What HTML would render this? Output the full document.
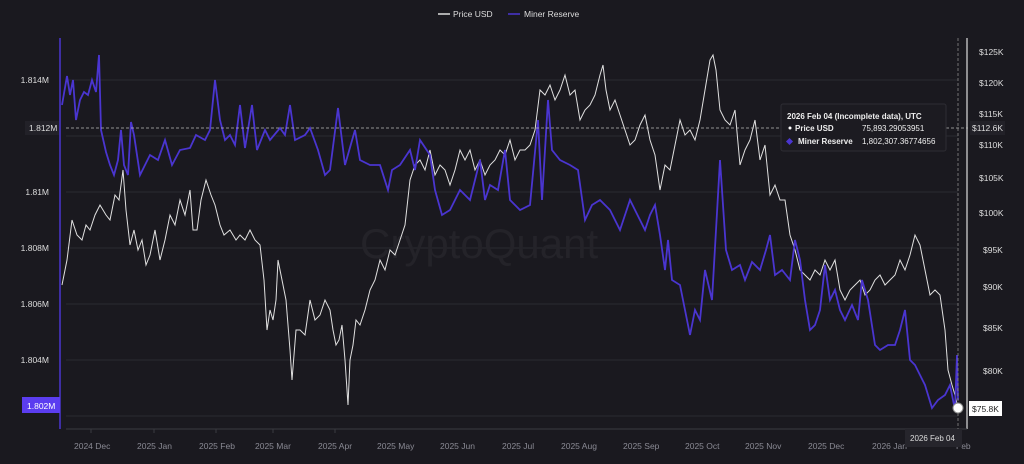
<!DOCTYPE html>
<html><head><meta charset="utf-8"><style>
body{margin:0;background:#1a191f;width:1024px;height:459px;overflow:hidden;font-family:"Liberation Sans",sans-serif}
svg text{font-family:"Liberation Sans",sans-serif}
</style></head><body>
<svg width="1024" height="459" xmlns="http://www.w3.org/2000/svg">
<rect width="1024" height="459" fill="#1a191f"/>
<g font-size="8.5" fill="#ddd">
<line x1="438" y1="14" x2="450" y2="14" stroke="#ddd" stroke-width="1.5"/><text x="453" y="17">Price USD</text>
<line x1="508" y1="14" x2="520" y2="14" stroke="#4a35d0" stroke-width="1.5"/><text x="524" y="17">Miner Reserve</text>
</g>
<g stroke="#2a2a30" stroke-width="1">
<line x1="66" y1="80" x2="958" y2="80"/><line x1="66" y1="136" x2="958" y2="136"/><line x1="66" y1="192" x2="958" y2="192"/><line x1="66" y1="248" x2="958" y2="248"/><line x1="66" y1="304" x2="958" y2="304"/><line x1="66" y1="360" x2="958" y2="360"/><line x1="66" y1="416" x2="958" y2="416"/>
</g>
<text x="360" y="258" font-size="42" fill="#242329">CryptoQuant</text>
<line x1="60" y1="38" x2="60" y2="429" stroke="#4a35d0" stroke-width="1.5"/>
<line x1="967" y1="38" x2="967" y2="429" stroke="#ddd" stroke-width="1.2"/>
<line x1="66" y1="429" x2="967" y2="429" stroke="#3a3a40"/>
<g font-size="8.5" fill="#ddd" text-anchor="end">
<text x="49" y="83">1.814M</text><text x="49" y="195">1.81M</text><text x="49" y="251">1.808M</text><text x="49" y="307">1.806M</text><text x="49" y="363">1.804M</text>
</g>
<rect x="25" y="121" width="34" height="14" fill="#222128"/><text x="29" y="131" font-size="8.5" fill="#ddd">1.812M</text>
<rect x="22" y="397" width="38" height="16" fill="#5b3df0"/><text x="27" y="409" font-size="8.5" fill="#fff">1.802M</text>
<g font-size="8.5" fill="#ddd">
<text x="979" y="55">$125K</text><text x="979" y="86">$120K</text><text x="979" y="117">$115K</text><text x="979" y="148">$110K</text><text x="979" y="181">$105K</text><text x="979" y="216">$100K</text><text x="983" y="253">$95K</text><text x="983" y="290">$90K</text><text x="983" y="331">$85K</text><text x="983" y="374">$80K</text>
</g>
<rect x="970" y="121" width="35" height="14" fill="#222128"/><text x="972" y="131" font-size="8.5" fill="#ddd">$112.6K</text>
<g font-size="8.5" fill="#8a8a94">
<text x="74" y="449">2024 Dec</text><text x="137" y="449">2025 Jan</text><text x="199" y="449">2025 Feb</text><text x="255" y="449">2025 Mar</text><text x="318" y="449">2025 Apr</text><text x="377" y="449">2025 May</text><text x="440" y="449">2025 Jun</text><text x="502" y="449">2025 Jul</text><text x="561" y="449">2025 Aug</text><text x="623" y="449">2025 Sep</text><text x="685" y="449">2025 Oct</text><text x="745" y="449">2025 Nov</text><text x="808" y="449">2025 Dec</text><text x="872" y="449">2026 Jan</text><text x="956" y="449">Feb</text>
</g>
<g stroke="#3a3a40"><line x1="91" y1="429" x2="91" y2="433"/><line x1="154" y1="429" x2="154" y2="433"/><line x1="216" y1="429" x2="216" y2="433"/><line x1="273" y1="429" x2="273" y2="433"/><line x1="335" y1="429" x2="335" y2="433"/></g>
<polyline fill="none" stroke="#e0e0e0" stroke-width="1" points="62,285 67,260 72,220 77,235 82,240 86,225 90,230 95,215 100,205 106,215 110,220 115,195 119,200 123,170 126,210 130,245 134,230 138,250 142,240 146,265 150,255 155,230 160,260 165,240 170,215 175,225 180,200 185,215 190,190 193,230 197,230 201,200 206,180 211,195 215,205 220,225 224,235 230,230 236,240 240,235 245,240 250,230 255,240 260,245 264,280 267,330 270,310 273,320 276,300 278,260 282,280 286,300 290,350 292,380 296,330 300,330 305,335 310,300 315,320 320,315 325,300 330,310 333,330 336,345 339,340 342,325 345,360 348,405 350,360 353,345 356,320 360,325 365,310 370,290 375,280 380,260 385,270 390,250 395,255 400,240 405,225 410,180 415,165 420,160 425,170 430,150 435,175 440,165 445,170 450,185 455,170 460,150 465,160 470,150 475,170 480,160 485,175 490,165 495,160 500,150 505,155 510,140 515,160 520,150 525,150 530,145 535,130 540,90 545,95 550,85 555,100 560,90 565,75 570,95 575,90 580,120 585,110 590,105 595,95 600,75 603,65 606,90 610,110 615,100 620,115 625,130 630,145 635,140 640,125 645,115 650,140 655,155 660,190 665,165 670,170 675,145 680,120 685,135 690,130 695,140 700,120 705,90 710,60 713,55 716,70 720,110 725,120 730,125 735,110 740,165 745,150 750,140 755,120 760,160 765,145 770,195 775,185 780,200 785,200 790,235 795,250 800,270 805,275 810,280 815,270 820,275 825,260 830,270 835,260 840,290 845,300 850,290 855,285 860,280 865,295 870,290 875,280 880,275 885,285 890,280 895,275 900,260 905,270 910,255 915,235 920,245 925,270 930,295 935,290 940,295 945,330 948,370 952,385 955,395 958,408"/>
<polyline fill="none" stroke="#4a35d0" stroke-width="1.8" points="62,105 67,76 70,95 73,80 76,120 80,100 84,92 88,95 92,80 96,92 99,55 101,130 106,152 110,165 114,175 118,160 121,130 124,165 128,175 131,122 134,135 140,175 145,165 150,155 158,160 165,140 172,165 180,150 190,148 196,135 205,140 210,130 215,80 220,120 225,140 230,135 235,145 240,105 245,148 252,105 257,150 265,130 270,140 280,128 285,135 290,105 295,140 305,135 310,128 318,150 325,175 330,170 338,108 345,165 355,130 360,160 370,165 380,165 388,190 392,170 400,165 410,150 415,170 420,140 430,155 435,190 442,215 450,210 460,190 470,200 480,160 485,200 490,185 498,190 505,150 510,200 520,210 530,205 538,120 542,200 548,100 552,150 560,160 570,165 578,170 585,220 592,205 600,200 610,210 620,230 625,215 630,200 640,220 645,230 650,215 655,205 660,235 665,270 668,240 672,280 680,285 690,335 695,310 700,320 705,270 712,300 716,230 720,160 726,250 732,270 740,265 745,280 752,262 760,270 766,250 770,235 775,275 782,270 790,280 795,240 800,260 805,300 810,330 815,325 820,310 825,265 830,300 835,290 840,310 845,320 852,305 858,320 862,280 868,300 875,345 880,350 888,345 895,345 900,330 905,310 910,360 915,365 920,375 925,385 932,408 938,400 945,395 950,385 955,410 957,355 958,400"/>
<line x1="66" y1="128" x2="968" y2="128" stroke="#bbb" stroke-dasharray="3,2" stroke-width="0.8"/>
<line x1="958" y1="38" x2="958" y2="430" stroke="#888" stroke-dasharray="3,2" stroke-width="0.8"/>
<circle cx="958" cy="408" r="5" fill="#fff" stroke="#888" stroke-width="1"/>
<rect x="969" y="401" width="33" height="15" fill="#fff"/><text x="972" y="412" font-size="8.5" fill="#222">$75.8K</text>
<rect x="905" y="429" width="57" height="18" fill="#26252c"/><text x="910" y="441" font-size="8" fill="#ddd">2026 Feb 04</text>
<rect x="781" y="104" width="165" height="47" rx="2" fill="#1c1b21" stroke="#2e2d34"/>
<g font-size="8" fill="#eee">
<text x="787" y="119" font-weight="bold">2026 Feb 04 (Incomplete data), UTC</text>
<circle cx="790" cy="128" r="1.5" fill="#fff"/><text x="795" y="131" font-weight="bold">Price USD</text><text x="862" y="131">75,893.29053951</text>
<rect x="787" y="139" width="5" height="5" fill="#4a35d0" transform="rotate(45 789.5 141.5)"/><text x="798" y="144" font-weight="bold">Miner Reserve</text><text x="862" y="144">1,802,307.36774656</text>
</g>
</svg>
</body></html>
